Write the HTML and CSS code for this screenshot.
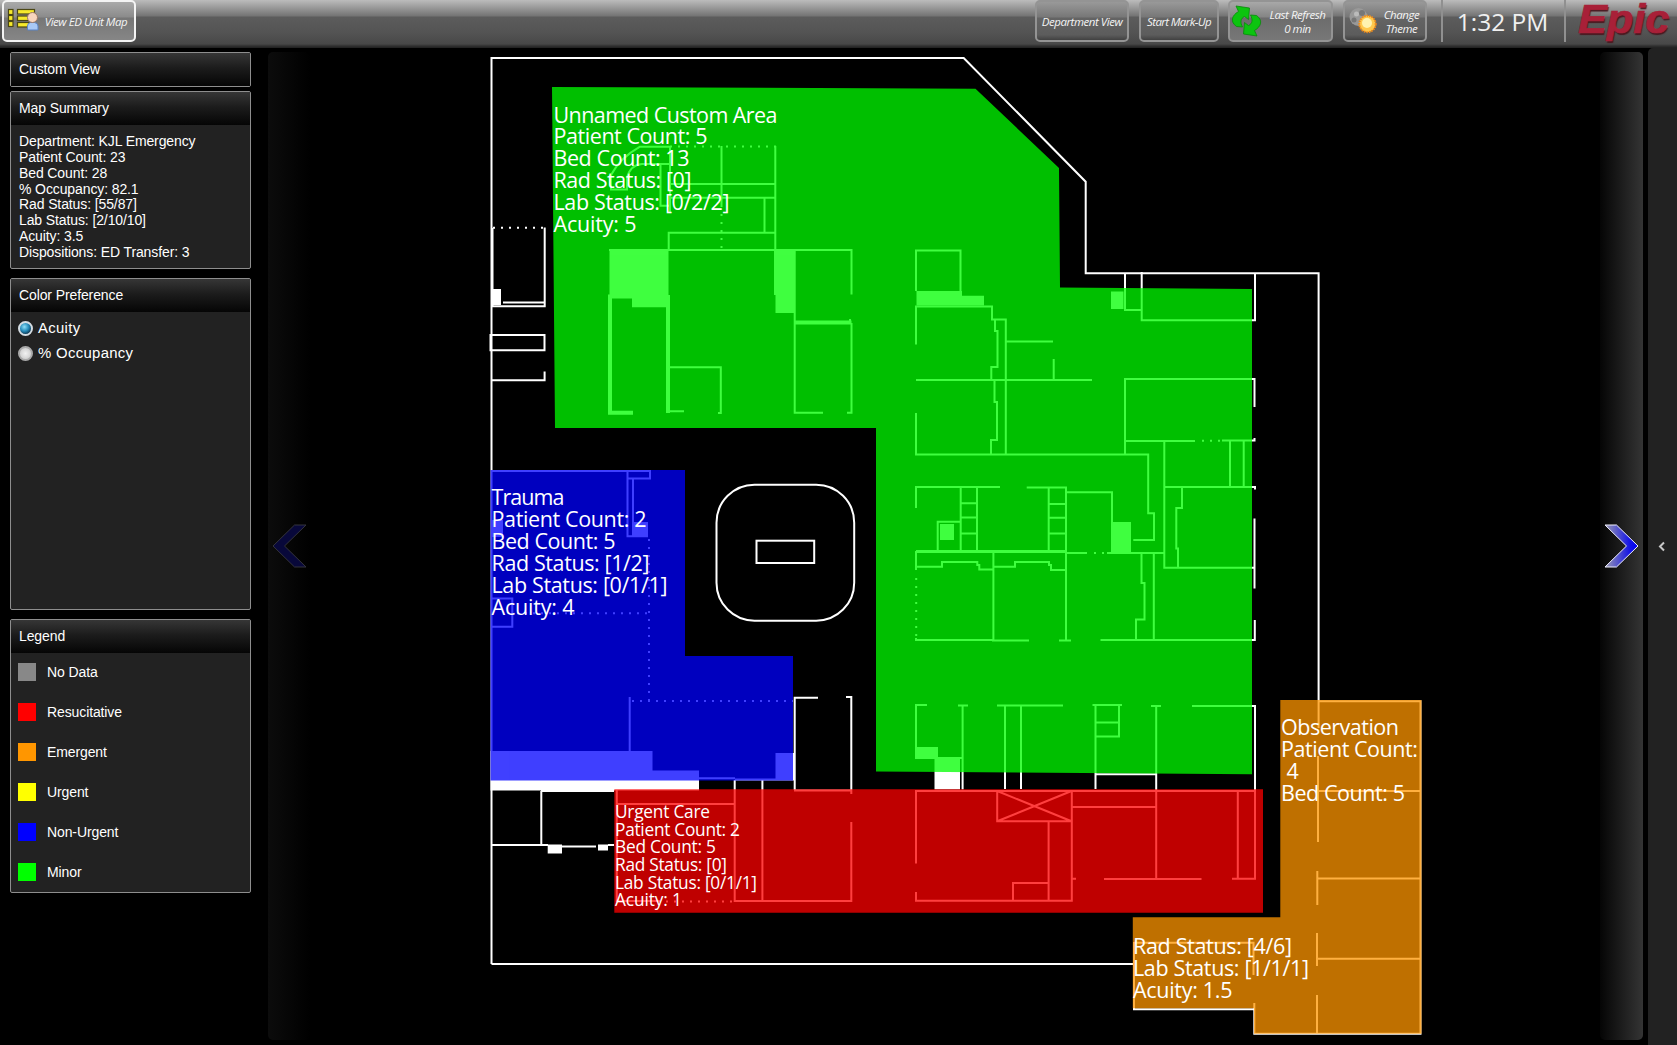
FILE: index.html
```
<!DOCTYPE html>
<html lang="en">
<head>
<meta charset="utf-8">
<title>ED Unit Map</title>
<link rel="stylesheet" href="styles.css">
</head>
<body>
<header class="toolbar">
  <button class="tool tool-active">
    <svg class="icon-list" width="34" height="28" viewBox="0 0 34 28">
      <g fill="#f6e92c" stroke="#4b4715" stroke-width="1.2">
        <rect x="1.5" y="2.5" width="4.5" height="5"/><rect x="1.5" y="8.5" width="4.5" height="5"/><rect x="1.5" y="14.500" width="4.500" height="5"/>
        <rect x="10.500" y="2.500" width="17" height="4.500"/><rect x="10.500" y="9" width="17" height="4.500"/><rect x="10.500" y="15.500" width="12" height="4.500"/>
      </g>
      <path d="M20.500 23v-4q0-3 3-3.500h4q3.500.5 3.500 3.500v4z" fill="#a9c8f5" stroke="#5b83c4"/>
      <circle cx="25.500" cy="10.500" r="5" fill="#f8d5bd" stroke="#9b7866"/>
    </svg>
    <span class="label">View ED Unit Map</span>
  </button>
  <div class="tools">
    <button class="tool tool-dept"><span class="label">Department View</span></button>
    <button class="tool tool-mark"><span class="label">Start Mark-Up</span></button>
    <button class="tool tool-refresh">
      <svg width="32" height="34" viewBox="0 0 32 34">
        <g fill="#0cc40f" stroke="#078a0a" stroke-width=".8" stroke-linejoin="round">
          <path d="M5 2 18.500 4 17.500 15.500 13.500 12.500C9.500 14.500 9 18 11.500 23L5.500 22.500C-1 18 .5 11.500 7.500 7.500z"/>
          <path d="M5 2 18.500 4 17.500 15.500 13.500 12.500C9.500 14.500 9 18 11.500 23L5.500 22.500C-1 18 .5 11.500 7.500 7.500z" transform="rotate(180 15.500 17)"/>
        </g>
      </svg>
      <span class="label">Last Refresh<br>0 min</span>
    </button>
    <button class="tool tool-theme">
      <svg width="30" height="30" viewBox="0 0 30 30">
        <circle cx="10.500" cy="11" r="9" fill="#999"/>
        <circle cx="8.500" cy="8" r="2.500" fill="#bbb"/><circle cx="14" cy="7" r="3" fill="#777"/><circle cx="6" cy="14" r="2.500" fill="#777"/>
        <circle cx="19.500" cy="18" r="8.200" fill="#ffc94d" stroke="#f08a1a" stroke-width="2" stroke-dasharray="1.500 1"/>
        <circle cx="19" cy="17" r="5" fill="#fff3b0"/>
      </svg>
      <span class="label">Change<br>Theme</span>
    </button>
    <div class="clock">1:32 PM</div>
    <div class="brand">Epic</div>
  </div>
</header>
<div class="workspace">
  <aside class="sidebar">
    <section class="panel panel-view"><h2>Custom View</h2></section>
    <section class="panel panel-summary">
      <h2>Map Summary</h2>
      <ul class="summary">
        <li>Department: KJL Emergency</li><li>Patient Count: 23</li><li>Bed Count: 28</li><li>% Occupancy: 82.1</li>
        <li>Rad Status: [55/87]</li><li>Lab Status: [2/10/10]</li><li>Acuity: 3.5</li><li>Dispositions: ED Transfer: 3</li>
      </ul>
    </section>
    <section class="panel panel-color">
      <h2>Color Preference</h2>
      <div class="options">
        <label class="option"><i class="radio radio-on"></i>Acuity</label>
        <label class="option"><i class="radio"></i>% Occupancy</label>
      </div>
    </section>
    <section class="panel panel-legend">
      <h2>Legend</h2>
      <ul class="legend">
        <li><i class="swatch none"></i>No Data</li>
        <li><i class="swatch resuscitative"></i>Resucitative</li>
        <li><i class="swatch emergent"></i>Emergent</li>
        <li><i class="swatch urgent"></i>Urgent</li>
        <li><i class="swatch nonurgent"></i>Non-Urgent</li>
        <li><i class="swatch minor"></i>Minor</li>
      </ul>
    </section>
  </aside>
  <div class="pager pager-prev">
    <svg width="36" height="46" viewBox="0 0 36 46"><path d="M35 2H23.500L2 23l21.500 21H35L13.500 23z" fill="#08083a" stroke="#34343c"/></svg>
  </div>
  <main class="map">
    <svg width="1290" height="997" viewBox="310 48 1290 997">
      <!-- walls -->
      <g class="walls">
        <path d="M491.500 964V58H963.700L1085.700 181.700V273.300H1318.600V728M491.500 964H1133"/>
        <path d="M544.700 227.500V306.300H491M503 302.500H544M490.500 335H544.500V350.300H490.500ZM491 380.300H544.600V371.500M492.500 228V306"/>
        <path d="M670 146.700H640Q620 158 611 175V189.500H627V178Q630 165 642 164H670M670 146V212M660.500 164V205.700H670M721.500 146V207M775.300 146V249M670 184H775M670 197.700H775M764.500 198V232M668.700 250V232.700H775M609 250H851.500V294.500M775 250V295"/>
        <path class="thick" d="M633 412.700H610V296.500H633M668 295V413M794 322.600H851.500"/>
        <path d="M668 411.300H684M670 367.300H720.800V413H718M794.700 250V412.700H823M850 319V323M851.500 323V412.700H847"/>
        <path d="M916 291V250.500H960.500V291M916 344.500V306.500H992V319.500H1005.800V455M995 319.500V331H997.500V367H991.300V380M916 380H1092M1006 341.500H1053M1053.700 359V380M994.500 380V402H997V440H991V454.500M916 413V454.500H1148.200V513.300H1154V540H1133.300"/>
        <path d="M1125 273V310H1141.700M1141.700 272V320.300H1255V273M1125 454V379H1254.500V407M1125 441H1195M1222 440.500H1254.500V438M1164.300 441V567.700H1255M1230 441V486.800M1243.700 441V486.800M1164 487H1255V489.500M1182 487V508H1176.300V548.500H1178V567"/>
        <path d="M916 508V487H1000M1026.700 487.500H1066V641M960.700 487V551M977 487V551M961 503.300H977M961 517.500H977M961 533.500H977M1048.700 487V551M1049 504H1066M1049 517.700H1066M1049 533.500H1066M1066 492.300H1112V552M937.700 551V521.700H960"/>
        <path class="mid" d="M916 551.500H1066"/>
        <path d="M1066 553H1087M1107 553H1164M916 551V570M916 566.700H942V562H977.300V565H979.300V569.500H993M993.400 551V640M994 566.700H1015V562H1049V565H1051V570H1066M1141.500 553V583H1144.500V619.500H1136V640M1153.800 553V640M916 638V640H993V640.600H1029M1059 640.600H1071M1100.500 640H1254.800V620M1254.500 518.500V588.500"/>
        <path d="M927 705H916V758H963M958 705.500H968M962.600 706V789.500M997 705.500H1063M1005 705V789M1021 706V789M1092.500 705H1122M1095.500 705V789M1119 705V736.500H1096M1096 722.500H1119M1151 706H1161M1156.200 706V879M1095.500 774.300H1156M1192 706H1255V878.700H1232"/>
        <path d="M1255 791H916V863.500M916 892V900.700H1071.800V790M997.200 790V821.300H1071.500M997.200 791 1071.500 821.300M997.200 821.300 1071.500 791M1048.600 821V901M1013 901V883H1048M1072 807H1156M1072 878.700H1076M1104 879H1201.500M1237.800 790V879"/>
        <path d="M491 471H650V478.500H627M627.500 471V536.300H648M633 479V536M491 598.500H512.300V626.700H491M629.700 697V751M699 778.300H735M735 779.500H795M794.700 790V697.700H818M846 697H851.300V794M794 790.500H852"/>
        <path d="M541 791H614M541.300 791V845M491 845H548M562 846.500H596M608 845H614M617 804H735M616.800 790V901H660M734.700 780V901H851.300V822M762.400 780V901"/>
        <path d="M1318 701.200H1420.500V1033.700H1254.300V1003M1318 756V842M1318 791H1421M1317.300 871V905M1318 878.500H1421M1317 933V966M1317 958.700H1421M1317 995V1034M1134 942.700H1253.500V975M1134 942V1009.300H1254"/>
        <path class="dots" d="M493 227.700H544M670 146.500H777M721.500 214V250M1202 440.700H1222M1094 553H1104M916.200 578V638M649 539V700M517 613.300H648M632 701H793M666 901.500H734"/>
        <rect x="716.500" y="484.700" width="137.700" height="136" rx="38"/>
        <rect x="756.500" y="540.700" width="57.700" height="22.300"/>
        <path class="solid" d="M491 289h10v16h-10zM609.500 249h59v46h-59zM632 295h36v12.300h-36zM775.500 250h18.500v63h-18.500zM916.500 291h45.500v14.500h-45.500zM962 295.700h22v9.800h-22zM1111 291.500h12.500v17.500h-12.500zM940 524h14v16h-14zM1111 522h20v30.500h-20zM916 747h22v11h-22zM934.500 758h25.500v31.500h-25.500z"/>
        <path class="solid" d="M491 520h12v17h-12zM632 522h16v15h-16zM490.500 751h162v19.500h46.500v20h-208.500zM775.500 753h18.500v26h-18.500zM547.700 844.500h14.300v9h-14.300zM598 844.500h10v6h-10z"/>
      </g>
      <!-- unit areas -->
      <g class="areas">
        <path fill="#0f0" d="M552 87 975.500 88.700 1059 168 1060 287.500 1252 289V774.200L876 771.500V428H555z"/>
        <path fill="#00f" d="M490.500 470H685V656H793V780.500H490.500z"/>
        <path fill="#f00" d="M614.300 789.300H1263V912.700H614.300z"/>
        <path fill="#ff9600" d="M1280.300 700H1421.500V1033.700H1254V1008.300H1132.800V917.300H1280.300z"/>
      </g>
      <g class="area-text">
        <text x="553.500" y="123" textLength="224">Unnamed Custom Area</text>
        <text x="553.500" y="144.300" textLength="154">Patient Count: 5</text>
        <text x="553.500" y="166.300" textLength="136">Bed Count: 13</text>
        <text x="553.500" y="188.300" textLength="138">Rad Status: [0]</text>
        <text x="553.500" y="210.300" textLength="176">Lab Status: [0/2/2]</text>
        <text x="553.500" y="232.300" textLength="83">Acuity: 5</text>
        <text x="491.500" y="505" textLength="73">Trauma</text>
        <text x="491.500" y="527" textLength="155">Patient Count: 2</text>
        <text x="491.500" y="549" textLength="124">Bed Count: 5</text>
        <text x="491.500" y="571" textLength="158">Rad Status: [1/2]</text>
        <text x="491.500" y="593" textLength="176">Lab Status: [0/1/1]</text>
        <text x="491.500" y="615" textLength="83">Acuity: 4</text>
        <text x="1281" y="735" textLength="118">Observation</text>
        <text x="1281" y="757" textLength="137">Patient Count:</text>
        <text x="1286.500" y="779" textLength="12">4</text>
        <text x="1281" y="801" textLength="124">Bed Count: 5</text>
        <text x="1133" y="954" textLength="159">Rad Status: [4/6]</text>
        <text x="1133" y="976" textLength="176">Lab Status: [1/1/1]</text>
        <text x="1133" y="998" textLength="99.500">Acuity: 1.5</text>
      </g>
      <g class="area-text area-text-small">
        <text x="615" y="818" textLength="95">Urgent Care</text>
        <text x="615" y="836" textLength="125">Patient Count: 2</text>
        <text x="615" y="853.300" textLength="101">Bed Count: 5</text>
        <text x="615" y="871" textLength="112">Rad Status: [0]</text>
        <text x="615" y="889" textLength="142">Lab Status: [0/1/1]</text>
        <text x="615" y="906" textLength="67">Acuity: 1</text>
      </g>
    </svg>
  </main>
  <div class="pager pager-next">
    <svg width="36" height="46" viewBox="0 0 36 46">
      <defs><linearGradient id="arrow"><stop offset="0" stop-color="#9a9ab0"/><stop offset=".75" stop-color="#1414e6"/><stop offset="1" stop-color="#0000f0"/></linearGradient></defs>
      <path d="M1 2H12.500L34 23 12.500 44H1L22.500 23z" fill="url(#arrow)" stroke="#f0f0ff"/>
    </svg>
  </div>
  <div class="drawer">
    <svg width="8" height="12" viewBox="0 0 8 12"><path d="M6 1.500 2 5.500 6 9.500" fill="none" stroke="#c8c8c8" stroke-width="2"/></svg>
  </div>
</div>
</body>
</html>
```
FILE: styles.css
```
* { box-sizing: border-box; }
body { margin: 0; width: 1677px; height: 1045px; overflow: hidden; background: #000; color: #fff; font: 14px/16px "Liberation Sans", Arial, sans-serif; }
h2, ul { margin: 0; padding: 0; list-style: none; font-weight: normal; }

.toolbar { display: flex; justify-content: space-between; height: 48px; padding: 0 0 0 2px; background: linear-gradient(#bcbcbc 0, #747474 16px, #5c5c5c 17px, #545454 32px, #484848 44px, #303030 46px, #202020 48px); }
.tool { display: flex; align-items: center; justify-content: center; height: 42px; margin: 0; padding: 0; border: 2px solid #949494; border-radius: 5px; background: linear-gradient(#999 0, #777 15px, #646464 16px, #5c5c5c 33px, #414141 38px); color: #f4f4f4; }
.tool-active { width: 134px; padding-right: 4px; border-color: #f4f4f4; background: linear-gradient(#aaa 0, #8b8b8b 15px, #767676 16px, #868686 38px); gap: 4px; }
.label { padding-top: 2px; font: italic 11.500px/14px "Open Sans", "Noto Sans", sans-serif; letter-spacing: -.45px; white-space: nowrap; text-align: center; }
.tools { display: flex; }
.tool-dept { width: 94px; margin-right: 10px; }
.tool-mark { width: 80px; margin-right: 9px; }
.tool-mark .label { letter-spacing: -.6px; }
.tool-refresh { width: 105px; margin-right: 10px; padding-right: 4px; gap: 6px; background: linear-gradient(#a8a8a8 0, #858585 15px, #6c6c6c 16px, #777 38px); }
.tool-theme { width: 84px; padding-right: 3px; gap: 6px; margin-right: 14px; }
.clock { width: 125px; height: 42px; padding-right: 2px; border: solid #909090; border-width: 0 2px; font: 24.500px/44px "Open Sans", "Noto Sans", sans-serif; letter-spacing: 0; text-align: center; color: #f0f0f0; white-space: nowrap; }
.brand { width: 111px; padding-left: 12px; font: italic bold 40px/39px "Liberation Sans", Arial, sans-serif; color: #a82038; text-shadow: 1px 2px 1px #4a1820; -webkit-text-stroke: .7px #a82038; transform: scaleX(1.08); transform-origin: 12px 0; }

.workspace { display: flex; height: 997px; }
.sidebar { width: 268px; padding: 4px 17px 0 10px; }
.panel { border: 1px solid #8e8e8e; border-radius: 2px; background: #222; letter-spacing: -.11px; }
.panel h2 { height: 33px; padding-left: 8px; font-size: 14px; line-height: 33px; background: linear-gradient(#363636, #1c1c1c 45%, #050505); }
.panel-view { height: 35px; margin-bottom: 4px; }
.panel-summary { height: 178px; margin-bottom: 9px; }
.panel-color { height: 332px; margin-bottom: 9px; }
.panel-legend { height: 274px; }
.summary { padding: 9px 8px 0; line-height: 15.850px; }
.options { display: flex; flex-direction: column; gap: 9px; padding: 8px 7px; font-size: 14.900px; letter-spacing: .32px; }
.option { display: flex; align-items: center; gap: 5px; height: 16px; }
.radio { width: 15px; height: 15px; border: 2px solid #aaa; border-radius: 50%; background: radial-gradient(#f2f2f2, #c4c4c4); }
.radio-on { border-color: #d4dce2; background: radial-gradient(circle at 40% 35%, #8ee0f8, #2389b8 45%, #103c58 75%); }
.legend { padding-top: 10px; }
.legend li { display: flex; align-items: center; gap: 11.500px; height: 18px; padding-left: 6.500px; margin-bottom: 22px; }
.swatch { width: 18px; height: 18px; }
.none { background: #888; }
.resuscitative { background: #f00; }
.emergent { background: #ff9600; }
.urgent { background: #ff0; }
.nonurgent { background: #00f; }
.minor { background: #0f0; }

.pager { display: flex; align-items: center; width: 42px; height: 988px; margin-top: 4px; }
.pager-prev { padding-left: 2.500px; background: linear-gradient(90deg, #0c0c0c, #000); border-radius: 5px; }
.pager-next { padding-left: 4px; width: 43px; background: linear-gradient(90deg, #050505, #343434); border-radius: 5px; }
.map { width: 1290px; height: 997px; }
.map svg { display: block; }
.drawer { display: flex; align-items: center; justify-content: center; width: 29px; margin-left: 5px; padding-right: 2px; border-radius: 5px 0 0 0; background: #222; }

.walls { fill: none; stroke: #fff; stroke-width: 2; }
.walls .thick { stroke-width: 4; }
.walls .mid { stroke-width: 3; }
.walls .dots { stroke-dasharray: 2 6; }
.walls .solid { fill: #fff; stroke: none; }
.areas { opacity: .75; }
.area-text { fill: #fff; font: 21.500px "Open Sans", "Noto Sans", sans-serif; }
.area-text-small { font-size: 17.300px; }
```
